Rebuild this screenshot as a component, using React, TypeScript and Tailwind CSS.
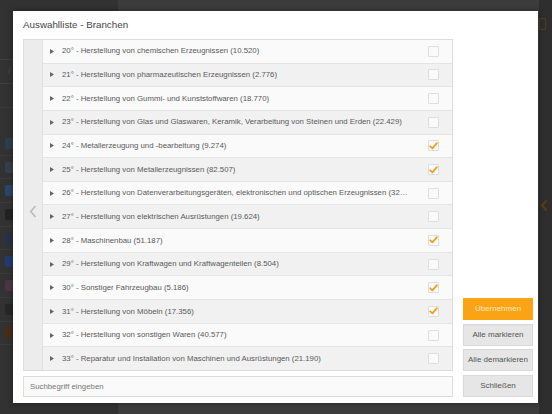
import React from "react";

const rows: { t: string; c: boolean }[] = [
  { t: "20° - Herstellung von chemischen Erzeugnissen (10.520)", c: false },
  { t: "21° - Herstellung von pharmazeutischen Erzeugnissen (2.776)", c: false },
  { t: "22° - Herstellung von Gummi- und Kunststoffwaren (18.770)", c: false },
  { t: "23° - Herstellung von Glas und Glaswaren, Keramik, Verarbeitung von Steinen und Erden (22.429)", c: false },
  { t: "24° - Metallerzeugung und -bearbeitung (9.274)", c: true },
  { t: "25° - Herstellung von Metallerzeugnissen (82.507)", c: true },
  { t: "26° - Herstellung von Datenverarbeitungsgeräten, elektronischen und optischen Erzeugnissen (32.186)", c: false },
  { t: "27° - Herstellung von elektrischen Ausrüstungen (19.624)", c: false },
  { t: "28° - Maschinenbau (51.187)", c: true },
  { t: "29° - Herstellung von Kraftwagen und Kraftwagenteilen (8.504)", c: false },
  { t: "30° - Sonstiger Fahrzeugbau (5.186)", c: true },
  { t: "31° - Herstellung von Möbeln (17.356)", c: true },
  { t: "32° - Herstellung von sonstigen Waren (40.577)", c: false },
  { t: "33° - Reparatur und Installation von Maschinen und Ausrüstungen (21.190)", c: false },
];

const sideIcons = [
  "bg-[#2b3f52]",
  "bg-[#34404e]",
  "bg-[#27486a]",
  "bg-[#222222]",
  "bg-[#253248]",
  "bg-[#233a70]",
  "bg-[#4f3544]",
  "bg-[#272727]",
  "bg-[#4a2c1a]",
];

function Check() {
  return (
    <svg width="9" height="8" viewBox="0 0 9 8" className="block">
      <path d="M1.2 4.3 L3.4 6.4 L7.9 1.2" fill="none" stroke="#f0a020" strokeWidth="1.8" strokeLinecap="round" strokeLinejoin="round" />
    </svg>
  );
}

export default function App() {
  return (
    <div className="relative w-[552px] h-[414px] overflow-hidden bg-[#3b3b3b] font-['Liberation_Sans',Arial,sans-serif] flex">
      {/* left page panel (dimmed) */}
      <div className="w-[118px] h-full bg-[#323232] flex flex-col">
        <div className="h-[60px] border-b border-[#3e3e3e]" />
        <div className="h-[24px] border-b border-[#3e3e3e] flex items-center pl-[8px]">
          <span className="text-[#4a4a4a] text-[9px]">/</span>
        </div>
        <div className="h-[24px] border-b border-[#3a3a3a]" />
        <div className="h-[24px]" />
        {sideIcons.map((c, i) => (
          <div key={i} className="h-[23.7px] border-b border-[#393939] flex items-center pl-[5px]">
            <div className={`w-[9px] h-[11px] rounded-[2px] ${c}`} />
          </div>
        ))}
      </div>
      <div className="flex-1 h-full bg-[#3c3c3c]" />
      <div className="w-[13px] h-full bg-[#2e2e2e] flex flex-col items-center">
        <div className="mt-[18px] ml-[-6px] w-[7px] h-[12px] border border-[#4e3e22]" />
        <div className="mt-[169px] ml-[-3px]">
          <svg width="8" height="13" viewBox="0 0 8 13">
            <path d="M6.5 1.5 L2 6.5 L6.5 11.5" fill="none" stroke="#5a3c10" strokeWidth="2.2" />
          </svg>
        </div>
      </div>

      {/* modal */}
      <div className="absolute left-[13px] top-[11px] w-[525px] h-[392px] bg-white shadow-[0_0_6px_rgba(0,0,0,0.4)] pl-[10px] pr-[5px] flex flex-col">
        <div className="h-[28px] flex items-center text-[9.8px] text-[#444]">Auswahlliste - Branchen</div>
        <div className="flex gap-[10px]">
          <div className="w-[430px] flex flex-col gap-[5px]">
            <div className="h-[332px] border border-[#dcdcdc] flex">
              <div className="w-[19px] bg-[#ececec] border-r border-[#e2e2e2] flex items-center justify-center pt-[12px]">
                <svg width="8" height="13" viewBox="0 0 8 13">
                  <path d="M6.5 1 L1.8 6.5 L6.5 12" fill="none" stroke="#bdbdbd" strokeWidth="1.8" />
                </svg>
              </div>
              <div className="flex-1 flex flex-col">
                {rows.map((r, i) => (
                  <div
                    key={i}
                    className={`flex-1 flex items-center pl-[7px] pr-[13px] ${i % 2 === 0 ? "bg-[#fafafa]" : "bg-[#f1f1f1]"} ${i < rows.length - 1 ? "border-b border-[#e4e4e4]" : ""}`}
                  >
                    <svg width="4" height="5" viewBox="0 0 4 5" className="shrink-0">
                      <polygon points="0,0 4,2.5 0,5" fill="#666" />
                    </svg>
                    <div className="ml-[8px] w-[346px] truncate text-[7.8px] text-[#595959]">{r.t}</div>
                    <div className="ml-auto w-[11px] h-[11px] border border-[#dedede] bg-[#fafafa] rounded-[1px] flex items-center justify-center shrink-0">
                      {r.c && <Check />}
                    </div>
                  </div>
                ))}
              </div>
            </div>
            <div className="h-[21px] border border-[#dcdcdc] bg-[#fafafa] flex items-center pl-[6px] text-[7.8px] text-[#777]">
              Suchbegriff eingeben
            </div>
          </div>
          <div className="w-[70px] flex flex-col justify-end gap-[3.3px]">
            <div className="h-[22.3px] bg-[#f9a315] flex items-center justify-center text-[8px] text-[#fde9c0]">Übernehmen</div>
            <div className="h-[22.3px] bg-[#e6e6e6] border border-[#d8d8d8] flex items-center justify-center text-[8px] text-[#555]">Alle markieren</div>
            <div className="h-[22.3px] bg-[#e6e6e6] border border-[#d8d8d8] flex items-center justify-center text-[8px] text-[#555]">Alle demarkieren</div>
            <div className="h-[22.3px] bg-[#e6e6e6] border border-[#d8d8d8] flex items-center justify-center text-[8px] text-[#555]">Schließen</div>
          </div>
        </div>
      </div>
    </div>
  );
}
